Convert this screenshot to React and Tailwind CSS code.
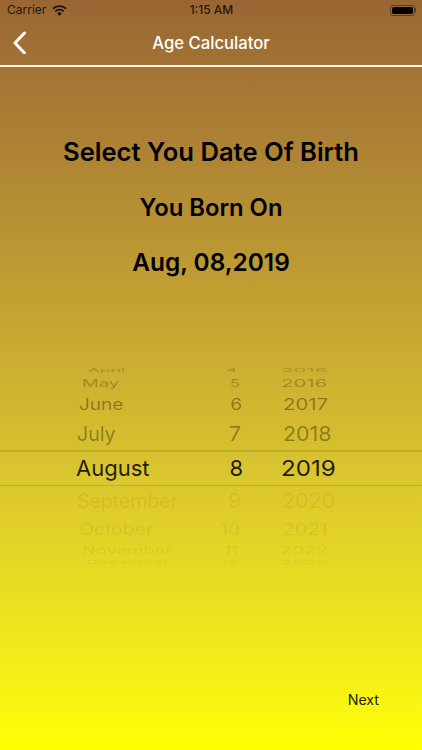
const rows = [
  { m: "April", d: "4", y: "2016", h: "h-[10px]", t: "text-[17px] scale-y-[0.32] text-black/20", mp: "pl-[88px]", ms: "", dc: "-translate-x-[6px]", yp: "pl-[38px]", ys: "scale-x-[1.2]" },
  { m: "May", d: "5", y: "2016", h: "h-[16px]", t: "text-[17px] scale-y-[0.62] text-black/25", mp: "pl-[82px]", ms: "scale-x-[1.09]", dc: "-translate-x-[3px]", yp: "pl-[38px]", ys: "scale-x-[1.2]" },
  { m: "June", d: "6", y: "2017", h: "h-[26px]", t: "text-[19px] scale-y-[0.82] text-black/35", mp: "pl-[79px]", ms: "", dc: "-translate-x-[1px]", yp: "pl-[40px]", ys: "scale-x-[1.07]" },
  { m: "July", d: "7", y: "2018", h: "h-[32px]", t: "text-[21px] scale-y-[0.95] text-black/35", mp: "pl-[77px]", ms: "scale-x-[0.93]", dc: "-translate-x-[2px]", yp: "pl-[40px]", ys: "scale-x-[1.02]" },
  { m: "August", d: "8", y: "2019", h: "h-[36px]", t: "text-[22px] text-black/85", mp: "pl-[76px]", ms: "", dc: "", yp: "pl-[38px]", ys: "scale-x-[1.1]" },
  { m: "September", d: "9", y: "2020", h: "h-[30px]", t: "text-[21px] scale-y-[0.95] text-black/[.07]", mp: "pl-[77px]", ms: "scale-x-[0.925]", dc: "-translate-x-[2px]", yp: "pl-[39px]", ys: "scale-x-[1.02]" },
  { m: "October", d: "10", y: "2021", h: "h-[28px]", t: "text-[19px] scale-y-[0.82] text-black/[.07]", mp: "pl-[79px]", ms: "scale-x-[1.02]", dc: "-translate-x-[3px]", yp: "pl-[39px]", ys: "scale-x-[1.07]" },
  { m: "November", d: "11", y: "2022", h: "h-[14px]", t: "text-[17px] scale-y-[0.62] text-black/[.07]", mp: "pl-[82px]", ms: "scale-x-[1.08]", dc: "-translate-x-[5px]", yp: "pl-[37px]", ys: "scale-x-[1.15]" },
  { m: "December", d: "12", y: "2023", h: "h-[10px]", t: "text-[17px] scale-y-[0.32] text-black/[.06]", mp: "pl-[86px]", ms: "", dc: "-translate-x-[5px]", yp: "pl-[37px]", ys: "scale-x-[1.15]" },
];

export default function App() {
  return (
    <div className="w-[422px] h-[750px] overflow-hidden flex flex-col bg-gradient-to-b from-[#996633] to-[#ffff00] font-['Inter','Liberation_Sans',sans-serif]">
      <div className="h-[20px] shrink-0 grid grid-cols-3 items-center pl-[7px] pr-[6px] text-[12px] text-black/80">
        <div className="flex items-center gap-[6px]">
          <span>Carrier</span>
          <svg width="15" height="11" viewBox="0 0 15 11" fill="#000" fillOpacity="0.85">
            <path d="M7.5 11 5.2 8.3a3.3 3.3 0 0 1 4.6 0Z" />
            <path d="M3.9 6.9a5.3 5.3 0 0 1 7.2 0l1.2-1.4a7.3 7.3 0 0 0-9.6 0Z" />
            <path d="M1.6 4.3a8.8 8.8 0 0 1 11.8 0l1.3-1.4a10.8 10.8 0 0 0-14.4 0Z" />
          </svg>
        </div>
        <span className="font-medium text-center">1:15 AM</span>
        <div className="flex items-center justify-end">
          <div className="w-[25px] h-[11px] rounded-[3px] border border-black/40 p-[1px]">
            <div className="w-full h-full rounded-[2px] bg-black" />
          </div>
          <div className="w-[1px] h-[4px] bg-black/40" />
        </div>
      </div>
      <div className="h-[45px] shrink-0 flex items-center justify-center pt-[2px] relative text-white">
        <svg className="absolute left-[12px] top-[10px]" width="16" height="24" viewBox="0 0 16 24" fill="none" stroke="#fff" strokeWidth="3" strokeLinecap="round" strokeLinejoin="round">
          <path d="M12.5 3 3 13l9.5 10" />
        </svg>
        <span className="text-[16.7px] font-medium">Age Calculator</span>
      </div>
      <div className="h-[2px] shrink-0 bg-white/95" />
      <div className="flex flex-col items-center text-black shrink-0">
        <h1 className="mt-[69px] h-[32px] leading-[32px] text-[25.6px] font-semibold">Select You Date Of Birth</h1>
        <p className="mt-[24px] h-[32px] leading-[32px] text-[23.8px] font-semibold">You Born On</p>
        <p className="mt-[22px] h-[32px] leading-[32px] text-[24.4px] font-semibold">Aug, 08,2019</p>
      </div>
      <div className="mt-[88px] shrink-0 flex flex-col">
        {rows.map((r) => (
          <div
            key={r.m}
            className={`${r.h} flex items-center ${r.m === "August" ? "bg-white/[.02] border-t-2 border-b border-[#a08a10]/40" : ""}`}
          >
            <div className={`w-[200px] whitespace-nowrap ${r.mp}`}>
              <div className={`origin-left ${r.t} ${r.ms}`}>{r.m}</div>
            </div>
            <div className={`w-[43px] text-right ${r.t} ${r.dc}`}>{r.d}</div>
            <div className={`flex-1 ${r.yp}`}>
              <div className={`origin-left ${r.t} ${r.ys}`}>{r.y}</div>
            </div>
          </div>
        ))}
      </div>
      <div className="flex-1 flex items-end justify-end pr-[43px] pb-[40px] text-[14.2px] text-black/90">
        Next
      </div>
    </div>
  );
}
